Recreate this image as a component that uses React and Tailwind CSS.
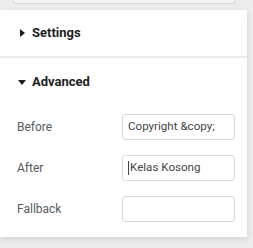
import React from 'react';

const rows = [
  { label: 'Before', value: 'Copyright &copy;' },
  { label: 'After', value: 'Kelas Kosong', focused: true },
  { label: 'Fallback', value: '' },
];

const Field = ({ label, value, focused }) => (
  <div className="flex items-center h-[41px]">
    <div className="w-[122px] pl-[17px] text-[12px] text-[#535b63]">{label}</div>
    <div className="flex items-center w-[113px] h-[26px] border border-[#d5d8dc] rounded-[3px] px-[5px] text-[11.6px] text-[#454545]">
      {focused && <span className="inline-block w-px h-[14px] bg-[#444] mr-px" />}
      {value}
    </div>
  </div>
);

export default function App() {
  return (
    <div className="w-[253px] h-[248px] bg-[#ededed] overflow-hidden font-['Roboto',sans-serif]">
      <div className="h-[10px]">
        <div className="ml-[13px] w-[223px] h-[4px] border-x border-b border-[#d6d6d6] rounded-b-[3px] bg-[#f4f4f4]" />
      </div>
      <div className="w-[247px] bg-[#ececec] shadow-[0_2px_6px_rgba(0,0,0,0.12)]">
        <div className="flex items-center h-[46px] bg-white pl-[20px]">
          <svg width="5" height="8" viewBox="0 0 5 8" className="mr-[7px]">
            <path d="M0 0 L5 4 L0 8 Z" fill="#1d1d1d" />
          </svg>
          <span className="text-[13px] font-bold text-[#1d1d1d]">Settings</span>
        </div>
        <div className="h-[2px]" />
        <div className="bg-white pb-[8px]">
          <div className="flex items-center h-[48px] pl-[18px]">
            <svg width="8" height="5" viewBox="0 0 8 5" className="mr-[6px]">
              <path d="M0 0 L8 0 L4 5 Z" fill="#1d1d1d" />
            </svg>
            <span className="text-[13px] font-bold text-[#1d1d1d]">Advanced</span>
          </div>
          {rows.map((r) => (
            <Field key={r.label} {...r} />
          ))}
        </div>
      </div>
    </div>
  );
}
